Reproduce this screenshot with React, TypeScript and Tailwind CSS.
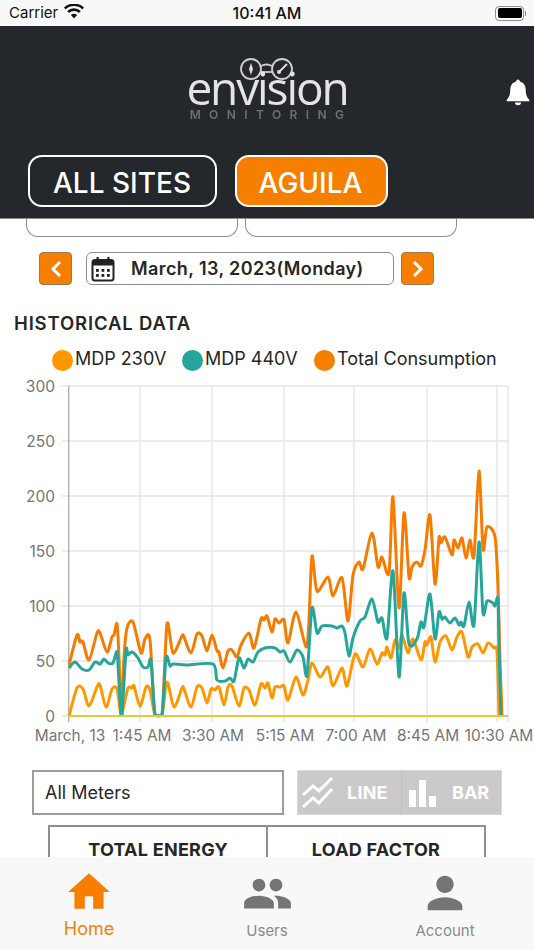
import React from "react";

type P = [number, number];

const total: P[] = [[69,665],[77,635],[80,642],[83,642],[89,660],[97,633],[100,633],[107,652],[112,637],[114,635],[117,624],[119,657],[121,715],[124,657],[127,628],[133,622],[141,653],[145,639],[150,640],[155,715],[162,715],[167,624],[173,653],[182,636],[184,637],[191,653],[197,634],[202,636],[207,651],[212,635],[217,651],[219,652],[223,668],[228,651],[232,650],[237,657],[241,645],[249,633],[254,648],[261,619],[264,620],[267,616],[272,632],[275,619],[279,623],[284,620],[288,643],[296,612],[306,647],[309,620],[312,556],[317,591],[328,577],[333,596],[342,578],[348,621],[353,575],[359,562],[363,569],[372,533],[378,567],[382,557],[389,573],[393,497],[399,608],[404,513],[409,577],[412,567],[417,562],[421,566],[425,550],[430,515],[435,584],[439,538],[441,543],[445,537],[452,555],[454,540],[458,548],[462,538],[466,558],[470,540],[474,556],[479,471],[483,549],[487,527],[495,537],[498,587],[500,660],[502,716]];

const teal: P[] = [[69,668],[75,662],[82,669],[89,670],[95,662],[100,664],[104,659],[108,663],[113,663],[117,652],[119,683],[121,715],[122,715],[126,651],[128,655],[132,652],[138,658],[143,667],[148,667],[151,661],[155,715],[162,715],[166,658],[170,666],[173,664],[187,665],[213,664],[217,680],[225,681],[230,678],[234,681],[239,658],[244,668],[248,659],[253,662],[258,652],[265,648],[275,648],[280,652],[284,651],[290,662],[297,650],[303,657],[307,675],[312,608],[317,633],[322,626],[332,626],[337,628],[342,626],[345,633],[349,656],[353,638],[360,621],[365,617],[372,599],[378,622],[382,618],[387,638],[393,571],[399,677],[404,593],[409,644],[417,639],[421,622],[424,627],[430,594],[435,639],[439,612],[442,619],[445,617],[450,623],[455,618],[459,625],[461,622],[464,626],[469,602],[474,625],[479,542],[483,613],[487,601],[493,603],[495,606],[498,599],[499,650],[501,716]];

const light: P[] = [[69,716],[77,688],[83,689],[89,706],[97,687],[100,685],[106,707],[112,689],[117,689],[121,715],[124,705],[128,688],[132,688],[134,686],[140,706],[146,687],[150,690],[155,715],[162,715],[167,682],[174,707],[182,688],[184,689],[191,707],[197,687],[202,688],[207,703],[211,689],[215,690],[219,687],[224,705],[228,687],[232,686],[239,706],[244,688],[249,690],[255,705],[261,684],[265,688],[268,683],[272,698],[275,687],[280,687],[284,686],[288,700],[296,677],[303,695],[308,680],[312,663],[320,677],[328,667],[333,686],[342,668],[347,686],[355,654],[363,667],[370,649],[377,664],[382,653],[385,655],[387,647],[391,658],[395,640],[399,648],[402,635],[408,653],[413,639],[421,660],[425,642],[427,645],[431,637],[435,662],[440,642],[446,636],[452,650],[457,637],[462,632],[468,657],[472,647],[478,644],[483,653],[488,643],[494,648],[497,652],[499,716]];

function smooth(pts: P[]): string {
  let d = `M${pts[0][0]} ${pts[0][1]}`;
  for (let i = 0; i < pts.length - 1; i++) {
    const p0 = pts[Math.max(0, i - 1)];
    const p1 = pts[i];
    const p2 = pts[i + 1];
    const p3 = pts[Math.min(pts.length - 1, i + 2)];
    const t = 0.14;
    const c1x = p1[0] + (p2[0] - p0[0]) * t;
    const c1y = Math.min(716, p1[1] + (p2[1] - p0[1]) * t);
    const c2x = p2[0] - (p3[0] - p1[0]) * t;
    const c2y = Math.min(716, p2[1] - (p3[1] - p1[1]) * t);
    d += `C${c1x.toFixed(1)} ${c1y.toFixed(1)} ${c2x.toFixed(1)} ${c2y.toFixed(1)} ${p2[0]} ${p2[1]}`;
  }
  return d;
}

const gridX = [140, 212, 284, 354, 427, 497, 508];
const yTicks = [[300, 386], [250, 441], [200, 496], [150, 551], [100, 606], [50, 661], [0, 716]];
const xTicks: [string, number, number][] = [["March, 13", 69, 70], ["1:45 AM", 140, 142], ["3:30 AM", 212, 213], ["5:15 AM", 284, 285], ["7:00 AM", 354, 356], ["8:45 AM", 427, 428], ["10:30 AM", 497, 499]];

function Chart() {
  return (
    <svg viewBox="0 376 534 374" className="block w-[534px] h-[374px] mt-[5px]" style={{ fontFamily: "Inter, sans-serif" }}>
      {gridX.map((x) => (
        <line key={x} x1={x} x2={x} y1={386} y2={722} stroke="#e2e2e2" strokeWidth="1.2" />
      ))}
      {yTicks.map(([v, y]) => (
        <g key={v}>
          <line x1={62} x2={508} y1={y} y2={y} stroke="#e6e6e6" strokeWidth="1.3" />
          <text x={55} y={y + 5.5} textAnchor="end" fontSize="15.5" fill="#757575">{v}</text>
        </g>
      ))}
      <line x1={68.7} x2={68.7} y1={386} y2={722} stroke="#adadad" strokeWidth="1.3" />
      {xTicks.map(([label, x, tx]) => (
        <text key={label} x={tx} y={741} textAnchor="middle" fontSize="15.4" fill="#757575">{label}</text>
      ))}
      <path d={smooth(total)} fill="none" stroke="#f57c00" strokeWidth="3" strokeLinejoin="round" />
      <path d={smooth(light)} fill="none" stroke="#ff9800" strokeWidth="3" strokeLinejoin="round" />
      <path d={smooth(teal)} fill="none" stroke="#26a69a" strokeWidth="3" strokeLinejoin="round" />
      <line x1={69} x2={508} y1={716} y2={716} stroke="#e4c83a" strokeWidth="2" />
    </svg>
  );
}

function Legend({ color, label, className }: { color: string; label: string; className: string }) {
  return (
    <div className={`flex items-center ${className}`}>
      <span className={`block w-[21px] h-[21px] rounded-full ${color}`} />
      <span className="ml-[2px] text-[18px] leading-[22px] text-[#262626] -mt-[3px]">{label}</span>
    </div>
  );
}

function TabItem({ label, active, icon, size }: { label: string; active?: boolean; icon: React.ReactNode; size: string }) {
  return (
    <div className="flex flex-col items-center">
      <div className={active ? "h-[56px] flex items-center justify-center" : "h-[56px] pt-[2px] flex items-center justify-center"}>{icon}</div>
      <span className={active ? `${size} leading-[22px] text-[#f77f00] -mt-[2px]` : `${size} leading-[22px] text-[#8a8a8a]`}>{label}</span>
    </div>
  );
}

export default function App() {
  return (
    <div className="w-[534px] h-[950px] flex flex-col overflow-hidden bg-white" style={{ fontFamily: "Inter, 'Noto Sans', sans-serif" }}>
      {/* status bar */}
      <div className="h-[26px] shrink-0 bg-[#f8f8f8] grid grid-cols-3 items-center text-[#111111]">
        <div className="flex items-center pl-[9px]">
          <span className="text-[15px] leading-[26px]">Carrier</span>
          <svg width="20" height="15" viewBox="0 0 20 15" className="ml-[6px] -mt-[3px]">
            <path d="M10 14.5 6.9 11a4.4 4.4 0 0 1 6.2 0zM5 9 3.2 7a9.8 9.8 0 0 1 13.6 0L15 9a7.2 7.2 0 0 0-10 0zM1.7 5.4 0 3.5a14.6 14.6 0 0 1 20 0l-1.7 1.9a12 12 0 0 0-16.6 0z" fill="#111" />
          </svg>
        </div>
        <div className="text-center text-[16px] font-medium leading-[26px]">10:41 AM</div>
        <div className="flex justify-end pr-[8px]">
          <div className="flex items-center">
            <div className="w-[29px] h-[15px] rounded-[4px] border border-[#8e8e8e] p-[1.5px]">
              <div className="w-full h-full rounded-[2px] bg-black" />
            </div>
            <div className="w-[1.5px] h-[5px] bg-[#8e8e8e] ml-[0.5px]" />
          </div>
        </div>
      </div>

      {/* header */}
      <div className="h-[193px] shrink-0 bg-[#24272c] border-b border-[#8a8a8a] flex flex-col">
        <div className="grid grid-cols-[1fr_auto_1fr] pt-[32px]">
          <div />
          <div className="flex flex-col items-center blur-[0.7px] w-[170px]">
            <svg width="58" height="22" viewBox="0 0 58 22" className="block">
              <g fill="none" stroke="#cfcfcf" strokeWidth="1.8">
                <circle cx="13" cy="11" r="10" />
                <circle cx="44" cy="11" r="10" />
                <path d="M23 8Q28.500 5 34 8" />
                <path d="M23 14h11" />
              </g>
              <path d="M13 5l2 6-2 6-2-6z" fill="#dedede" />
              <path d="M49 6 41 14" stroke="#dedede" strokeWidth="2" />
              <circle cx="41" cy="14" r="2" fill="#dedede" />
            </svg>
            <span className="block text-[46px] leading-[26px] -mt-[6px] font-normal tracking-[-2.1px] text-[#e4e4e4]" style={{ fontFamily: "'Open Sans', sans-serif" }}>envision</span>
            <span className="block text-[12px] leading-[12px] mt-[9px] tracking-[8.4px] pl-[8px] text-[#6d6f72] font-semibold">MONITORING</span>
          </div>
          <div className="flex justify-end pr-[4px] pt-[20px]">
            <svg width="24" height="28" viewBox="0 0 24 28">
              <path d="M12 1.5c-1.100 0-1.800.8-1.800 1.900C6.600 4.300 4.300 7.400 4.300 11.400c0 5.300-1.400 8.300-3.600 10.300v1.500h22.600v-1.500c-2.200-2-3.600-5-3.600-10.300 0-4-2.300-7.100-5.900-8 0-1.100-.7-1.900-1.800-1.900z" fill="#fff" />
              <path d="M9 24.500h6a3 2.800 0 0 1-6 0z" fill="#fff" />
            </svg>
          </div>
        </div>
        <div className="flex mt-[34px] ml-[28px] gap-[18px]">
          <div className="w-[189px] h-[52px] rounded-[14px] border-2 border-white bg-[#24272c] flex items-center justify-center text-white text-[28px] font-medium pr-[1px] pt-[3px]">ALL SITES</div>
          <div className="w-[153px] h-[52px] rounded-[14px] border-2 border-white bg-[#f77f00] flex items-center justify-center text-white text-[28px] font-medium pr-[2px] pt-[3px]">AGUILA</div>
        </div>
      </div>

      {/* scrolled content */}
      <div className="flex-1 min-h-0 overflow-hidden">
        <div className="flex h-[18px] pl-[26px] gap-[7px]">
          <div className="w-[212px] h-[18px] border border-t-0 border-[#8f8f8f] rounded-b-[12px]" />
          <div className="w-[212px] h-[18px] border border-t-0 border-[#8f8f8f] rounded-b-[12px]" />
        </div>

        <div className="flex h-[33px] mt-[15px] pl-[39px]">
          <div className="w-[33px] h-[33px] rounded-[4px] bg-[#f77f00] border border-[#9a7a55] flex items-center justify-center">
            <svg width="14" height="20" viewBox="0 0 14 20"><path d="M11 3 4 10l7 7" fill="none" stroke="#fff" strokeWidth="3" /></svg>
          </div>
          <div className="w-[308px] h-[33px] ml-[14px] rounded-[6px] border border-[#8c8c8c] flex items-center">
            <svg width="24" height="26" viewBox="0 0 24 26" className="ml-[4px]">
              <rect x="1.500" y="4" width="21" height="20.500" rx="2.500" fill="none" stroke="#222" strokeWidth="2" />
              <rect x="1.500" y="4" width="21" height="5.500" fill="#222" />
              <rect x="5.500" y="1" width="2.200" height="5" fill="#222" />
              <rect x="16.300" y="1" width="2.200" height="5" fill="#222" />
              {[5, 10.500, 16].map((x) => [13, 18].map((y) => <rect key={`${x}-${y}`} x={x} y={y} width="2.800" height="2.800" fill="#222" />))}
            </svg>
            <span className="ml-[16px] text-[18px] font-semibold text-[#262626] tracking-[0.4px] whitespace-nowrap">March, 13, 2023(Monday)</span>
          </div>
          <div className="w-[33px] h-[33px] ml-[7px] rounded-[4px] bg-[#f77f00] border border-[#9a7a55] flex items-center justify-center">
            <svg width="14" height="20" viewBox="0 0 14 20"><path d="M3 3l7 7-7 7" fill="none" stroke="#fff" strokeWidth="3" /></svg>
          </div>
        </div>

        <h2 className="mt-[26px] ml-[14px] text-[18.5px] leading-[24px] font-semibold text-[#262626] tracking-[0.85px] whitespace-nowrap">HISTORICAL DATA</h2>

        <div className="flex mt-[14px] h-[22px] pl-[52px]">
          <Legend color="bg-[#ff9800]" label="MDP 230V" className="w-[130px]" />
          <Legend color="bg-[#26a69a]" label="MDP 440V" className="w-[132px]" />
          <Legend color="bg-[#f77f00]" label="Total Consumption" className="w-[190px]" />
        </div>

        <Chart />

        <div className="flex mt-[20px] pl-[32px]">
          <div className="w-[252px] h-[45px] border-2 border-[#9c9c9c] flex items-center pl-[11px] text-[18px] text-[#262626]">All Meters</div>
          <div className="ml-[13px] w-[205px] h-[45px] bg-[#cbc9c9] border border-[#d8d8d8] flex text-white font-bold text-[18px]">
            <div className="w-[104px] flex items-center border-r border-[#c0bebe] pl-[4px]">
              <svg width="32" height="32" viewBox="0 0 32 32">
                <path d="M1 18 11 9l6 5L30 1" fill="none" stroke="#fff" strokeWidth="3" />
                <path d="M1 30 11 21l6 5L30 12" fill="none" stroke="#fff" strokeWidth="3" />
              </svg>
              <span className="ml-[13px] tracking-[0.2px]">LINE</span>
            </div>
            <div className="flex-1 flex items-center pl-[7px]">
              <svg width="28" height="28" viewBox="0 0 28 28">
                <rect x="0" y="11" width="7" height="17" fill="#fff" />
                <rect x="10" y="1" width="7" height="27" fill="#fff" />
                <rect x="20" y="17" width="7" height="11" fill="#fff" />
              </svg>
              <span className="ml-[15px] tracking-[0px]">BAR</span>
            </div>
          </div>
        </div>

        <div className="flex mt-[10px] ml-[48px] w-[438px] h-[60px] border-2 border-b-0 border-[#8f8f8f]">
          <div className="w-[218px] border-r-2 border-[#8f8f8f] text-center pt-[10px] text-[18px] leading-[26px] font-bold text-[#262626] tracking-[0.25px] whitespace-nowrap">TOTAL ENERGY</div>
          <div className="flex-1 text-center pt-[10px] text-[18px] leading-[26px] font-bold text-[#262626] tracking-[0.25px] whitespace-nowrap">LOAD FACTOR</div>
        </div>
      </div>

      {/* tab bar */}
      <div className="h-[93px] shrink-0 bg-[#f8f8f8] grid grid-cols-3 pt-[7px] items-start">
        <TabItem active size="text-[18px]" label="Home" icon={
          <svg width="50" height="50" viewBox="0 0 24 24"><path d="M10 20v-6h4v6h5v-8h3L12 3 2 12h3v8z" fill="#f77f00" /></svg>
        } />
        <TabItem size="text-[15px]" label="Users" icon={
          <svg width="51" height="51" viewBox="0 0 24 24"><path d="M16 11c1.660 0 2.990-1.340 2.990-3S17.660 5 16 5c-1.660 0-3 1.340-3 3s1.340 3 3 3zm-8 0c1.660 0 2.990-1.340 2.990-3S9.660 5 8 5C6.340 5 5 6.340 5 8s1.340 3 3 3zm0 2c-2.330 0-7 1.170-7 3.500V19h14v-2.500c0-2.330-4.670-3.500-7-3.500zm8 0c-.290 0-.620.020-.970.050 1.160.840 1.970 1.970 1.970 3.450V19h6v-2.500c0-2.330-4.670-3.500-7-3.500z" fill="#757575" /></svg>
        } />
        <TabItem size="text-[15px]" label="Account" icon={
          <svg width="52" height="52" viewBox="0 0 24 24"><path d="M12 12c2.210 0 4-1.790 4-4s-1.790-4-4-4-4 1.790-4 4 1.790 4 4 4zm0 2c-2.670 0-8 1.340-8 4v2h16v-2c0-2.660-5.330-4-8-4z" fill="#757575" /></svg>
        } />
      </div>
    </div>
  );
}
